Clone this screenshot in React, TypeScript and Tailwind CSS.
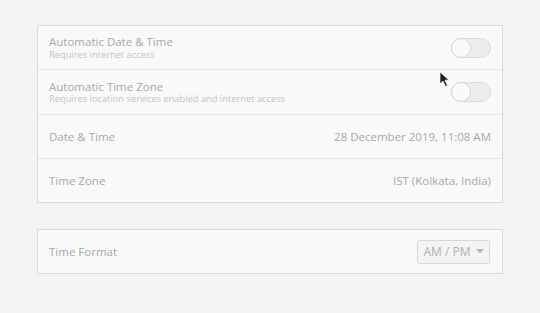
import React from "react";

function Toggle() {
  return (
    <div className="w-[40px] h-[20px] rounded-full bg-[#ececec] border border-[#dcdcdc] relative">
      <div className="absolute left-[-1px] top-[-1px] w-[20px] h-[20px] rounded-full bg-[#fafafa] border border-[#d6d6d6]" />
    </div>
  );
}

function Row({ children, last }: { children: React.ReactNode; last?: boolean }) {
  return (
    <div className={`flex items-center justify-between pl-[11px] pr-[11px] ${last ? "h-[43px]" : "h-[44px] border-b border-[#e6e6e6]"}`}>
      {children}
    </div>
  );
}

export default function App() {
  return (
    <div
      className="w-[540px] h-[313px] bg-[#f3f3f2] pt-[25px] relative overflow-hidden"
      style={{ fontFamily: '"Open Sans", "Noto Sans", sans-serif' }}
    >
      <div className="w-[466px] mx-auto border border-[#dadada] bg-[#f9f9f9]">
        <Row>
          <div className="flex flex-col leading-none">
            <span className="text-[11.5px] text-[#a8a8a8]">Automatic Date &amp; Time</span>
            <span className="text-[9.3px] text-[#c4c4c4] mt-[2px]">Requires internet access</span>
          </div>
          <Toggle />
        </Row>
        <div className="h-[45px] flex items-center justify-between pl-[11px] pr-[11px] border-b border-[#e6e6e6]">
          <div className="flex flex-col leading-none">
            <span className="text-[11.5px] text-[#a8a8a8]">Automatic Time Zone</span>
            <span className="text-[9.3px] text-[#c4c4c4] mt-[2px]">Requires location services enabled and internet access</span>
          </div>
          <Toggle />
        </div>
        <Row>
          <span className="text-[11.5px] text-[#a8a8a8]">Date &amp; Time</span>
          <span className="text-[11.5px] text-[#a8a8a8]">28 December 2019, 11:08 AM</span>
        </Row>
        <Row last>
          <span className="text-[11.5px] text-[#a8a8a8]">Time Zone</span>
          <span className="text-[11.5px] text-[#a8a8a8]">IST (Kolkata, India)</span>
        </Row>
      </div>
      <div className="w-[466px] mx-auto mt-[26px] border border-[#dadada] bg-[#f9f9f9]">
        <Row last>
          <span className="text-[11.5px] text-[#a8a8a8]">Time Format</span>
          <div className="w-[73px] h-[24px] mr-[1px] rounded-[3px] border border-[#d8d8d8] bg-[#f4f4f4] flex items-center justify-center gap-[5px]">
            <span className="text-[12px] text-[#b0b0b0]">AM / PM</span>
            <svg width="8" height="5" viewBox="0 0 8 5">
              <path d="M0 0 L8 0 L4 4.5 Z" fill="#b4b4b4" />
            </svg>
          </div>
        </Row>
      </div>
      <svg className="absolute left-[439px] top-[71px]" width="11" height="17" viewBox="0 0 11 17">
        <path d="M1 1 L1 13 L4 10 L6.5 15.5 L8.5 14.5 L6 9.2 L10 9.2 Z" fill="#1e1e1e" stroke="#f0f0f0" strokeWidth="0.8" />
      </svg>
    </div>
  );
}
